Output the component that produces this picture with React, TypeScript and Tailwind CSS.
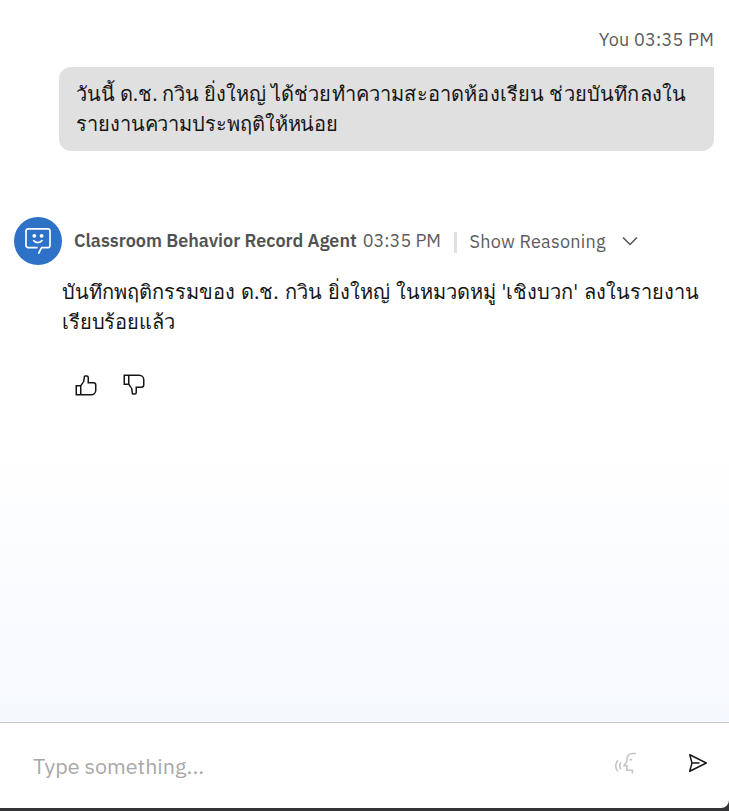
import type { ReactNode } from 'react';

const THUMB =
  'M26,12H20V6a3.0033,3.0033,0,0,0-3-3H14.8672a2.0094,2.0094,0,0,0-1.98,1.7173l-.9453,6.6165L8.4648,16H2V30H23a7.0078,7.0078,0,0,0,7-7V16A4.0045,4.0045,0,0,0,26,12ZM8,28H4V18H8Zm20-5a5.0057,5.0057,0,0,1-5,5H10V17.3027l3.9578-5.9365L14.8672,5H17a1.0008,1.0008,0,0,1,1,1v8h8a2.0025,2.0025,0,0,1,2,2Z';

function Icon({ children, className = '' }: { children: ReactNode; className?: string }) {
  return (
    <svg viewBox="0 0 32 32" fill="currentColor" className={`size-6 shrink-0 ${className}`}>
      {children}
    </svg>
  );
}

function AgentAvatar() {
  return (
    <div className="flex size-12 shrink-0 items-center justify-center rounded-full bg-[#2d72c7] text-white">
      <svg viewBox="0 0 28 28" className="size-7" fill="none" stroke="currentColor" strokeWidth="1.7" strokeLinecap="round" strokeLinejoin="round">
        <path d="M14.8 26 17.6 20.6H23.8a2.2 2.2 0 0 0 2.2-2.2V4a2.2 2.2 0 0 0-2.2-2.2H4.2A2.2 2.2 0 0 0 2 4v14.4a2.2 2.2 0 0 0 2.2 2.2h8.8" />
        <path d="M9.6 13.6c2 2.7 6.4 2.7 8.4 0" />
        <circle cx="10.3" cy="8.8" r="1.9" fill="currentColor" stroke="none" />
        <circle cx="17.6" cy="8.8" r="1.9" fill="currentColor" stroke="none" />
      </svg>
    </div>
  );
}

function UserMessage() {
  return (
    <section className="flex flex-col pr-[15px] pl-[59px]">
      <div className="text-right text-[18px] leading-6 tracking-[0.22px] text-[#5c5c5c]">You 03:35 PM</div>
      <div className="mt-[15px] h-[84px] rounded-xl rounded-tr-none bg-[#e0e0e0] px-[17px] pt-3 text-xl leading-[30px] whitespace-nowrap text-[#161616]">
        <p>
          วันนี้ ด.ช. กวิน ยิ่งใหญ่ <span className="tracking-[0.17px]">ได้ช่วยทำความสะอาดห้องเรียน ช่วยบันทึกลงใน</span>
        </p>
        <p className="tracking-[-0.08px]">รายงานความประพฤติให้หน่อย</p>
      </div>
    </section>
  );
}

function AgentMessage() {
  return (
    <section className="mt-[66px] pl-3.5">
      <header className="flex h-12 items-center text-[18px] whitespace-nowrap text-[#525252]">
        <AgentAvatar />
        <span className="ml-3 pb-0.5 font-semibold">Classroom Behavior Record Agent</span>
        <span className="ml-1.5 pb-0.5 text-[#5c5c5c]">03:35 PM</span>
        <span className="mt-0.5 ml-[13px] h-[21px] w-[3px] bg-[#e0e0e0]" />
        <span className="ml-[12.5px] tracking-[0.25px] text-[#5c5c5c]">Show Reasoning</span>
        <Icon className="ml-[12.5px]">
          <path d="M16 22 6 12 7.4 10.6 16 19.2 24.6 10.6 26 12z" />
        </Icon>
      </header>
      <div className="mt-3 pl-12 text-xl leading-[30px] whitespace-nowrap text-[#161616]">
        <p className="[word-spacing:1.2px]">บันทึกพฤติกรรมของ ด.ช. กวิน ยิ่งใหญ่ ในหมวดหมู่ 'เชิงบวก' ลงในรายงาน</p>
        <p className="tracking-[-0.14px]">เรียบร้อยแล้ว</p>
      </div>
      <div className="mt-9 flex gap-6 pl-[60px] text-[#161616]">
        <Icon>
          <path d={THUMB} />
        </Icon>
        <Icon className="-scale-y-100">
          <path d={THUMB} />
        </Icon>
      </div>
    </section>
  );
}

function Composer() {
  return (
    <footer className="h-[89px] bg-[#343436]">
      <div className="flex h-[86px] items-center rounded-br-lg border-t border-[#c6c6c6] bg-white pr-[19px] pb-[5px] pl-[33px]">
        <span className="grow pt-[7px] text-[21.5px] text-[#a8a8a8]">Type something...</span>
        <svg viewBox="0 0 24 24" className="mr-12 size-6 text-[#c6c6c6]" fill="none" stroke="currentColor" strokeWidth="1.6">
          <path d="M22 2.5h-3.5c-3.2 0-5.6 2.4-5.6 5.2v2.5L10 14.6h2.9v4.6h5.5v3.3M15.4 8.6h2.8M7 11.6c-1.5 2-1.5 4.6 0 6.6M4 9.4c-3 3.2-3 7.8 0 11" />
        </svg>
        <Icon className="text-[#161616]">
          <path d="M27.45,15.11l-22-11a1,1,0,0,0-1.08.12,1,1,0,0,0-.33,1L7,16,4,26.74A1,1,0,0,0,5,28a1,1,0,0,0,.45-.11l22-11a1,1,0,0,0,0-1.78Zm-20.9,10L8.76,17H18V15H8.76L6.55,6.89,24.76,16Z" />
        </Icon>
      </div>
    </footer>
  );
}

export default function App() {
  return (
    <div className="flex h-[811px] w-[729px] flex-col overflow-hidden bg-white font-['IBM_Plex_Sans','Noto_Sans',sans-serif]">
      <main className="grow bg-linear-to-b from-white from-62% to-[#f5f8fe] pt-7">
        <UserMessage />
        <AgentMessage />
      </main>
      <Composer />
    </div>
  );
}
